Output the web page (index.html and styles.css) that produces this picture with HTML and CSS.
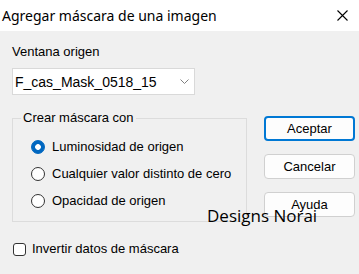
FILE: index.html
```html
<!DOCTYPE html>
<html lang="es">
<head>
    <meta charset="UTF-8">
    <title>Agregar máscara de una imagen</title>
    <link rel="stylesheet" href="styles.css">
</head>
<body>

    <!-- Barra de título -->
    <div class="titlebar">
        <span class="title">Agregar máscara de una imagen</span>
        <svg class="close" width="11" height="11" viewBox="0 0 11 11">
            <path d="M0.5 0.5 L10.5 10.5 M10.5 0.5 L0.5 10.5" stroke="#000" stroke-width="1.1" fill="none"/>
        </svg>
    </div>

    <div class="dialog">
        <div class="left">
            <div class="label">Ventana origen</div>
            <div class="combo">
                <span>F_cas_Mask_0518_15</span>
                <svg width="9" height="5" viewBox="0 0 9 5">
                    <path d="M0.5 0.5 L4.5 4.5 L8.5 0.5" stroke="#808080" stroke-width="1" fill="none"/>
                </svg>
            </div>

            <!-- Grupo de opciones -->
            <fieldset class="group">
                <legend>Crear máscara con</legend>
                <div class="option"><span class="radio checked"></span>Luminosidad de origen</div>
                <div class="option"><span class="radio"></span>Cualquier valor distinto de cero</div>
                <div class="option"><span class="radio"></span>Opacidad de origen</div>
            </fieldset>

            <div class="check-row"><span class="checkbox"></span>Invertir datos de máscara</div>
        </div>

        <div class="buttons">
            <button class="btn default">Aceptar</button>
            <button class="btn">Cancelar</button>
            <button class="btn">Ayuda</button>
        </div>

        <div class="watermark">Designs Norai</div>
    </div>

</body>
</html>
```

FILE: styles.css
```css
body {
    margin: 0;
    width: 359px;
    height: 274px;
    overflow: hidden;
    background-color: #f0f0f0;
    font-family: "Liberation Sans", Arial, sans-serif;
    font-size: 13px;
    color: #000;
}

.titlebar {
    height: 31px;
    background-color: #ffffff;
    display: flex;
    align-items: center;
    justify-content: space-between;
    padding: 0 11px 0 2px;
}

.title {
    font-family: "Noto Sans", sans-serif;
    font-size: 14px;
    line-height: 20px;
}

.close {
    display: block;
}

.dialog {
    position: relative;
    display: flex;
    padding: 13px 4px 0 12px;
}

.left {
    width: 235px;
}

.label {
    line-height: 16px;
}

.combo {
    margin-top: 8px;
    width: 183px;
    height: 27px;
    box-sizing: border-box;
    border: 1px solid #d9d9d9;
    background-color: #ffffff;
    display: flex;
    align-items: center;
    justify-content: space-between;
    padding: 0 5px 0 2px;
    font-size: 14px;
    line-height: 16px;
}

.combo svg {
    display: block;
}

/* Grupo "Crear máscara con" */
.group {
    margin: 15px 0 0;
    padding: 7px 0 7px 8px;
    border: 1px solid #dcdcdc;
    width: 235px;
    box-sizing: border-box;
    min-width: 0;
}

.group legend {
    padding: 0 2px;
    line-height: 16px;
}

.option {
    display: flex;
    align-items: center;
    gap: 7px;
    height: 27px;
    margin-left: 10px;
}

.radio {
    width: 14px;
    height: 14px;
    box-sizing: border-box;
    border: 1px solid #333333;
    border-radius: 50%;
    background-color: #ffffff;
}
.radio.checked {
    border-color: #0067c0;
    background: radial-gradient(circle, #ffffff 0 2.5px, #0067c0 3.2px);
}

.check-row {
    margin-top: 19px;
    display: flex;
    align-items: center;
    gap: 6px;
    line-height: 16px;
}

.checkbox {
    width: 13px;
    height: 13px;
    box-sizing: border-box;
    border: 1px solid #333333;
    border-radius: 3px;
    background-color: #ffffff;
    margin-left: 1px;
}

/* Botones */
.buttons {
    display: flex;
    flex-direction: column;
    gap: 13px;
    margin-left: 17px;
    padding-top: 72px;
}

.btn {
    width: 91px;
    height: 25px;
    box-sizing: border-box;
    padding: 0;
    border: 1px solid #d0d0d0;
    border-radius: 4px;
    background-color: #fdfdfd;
    font-family: "Liberation Sans", Arial, sans-serif;
    font-size: 13px;
    color: #000;
}
.btn.default {
    border: 2px solid #0078d4;
}

.watermark {
    position: absolute;
    left: 207px;
    top: 175px;
    font-family: "Open Sans", sans-serif;
    font-size: 17px;
    line-height: 20px;
    color: #000;
}
```
